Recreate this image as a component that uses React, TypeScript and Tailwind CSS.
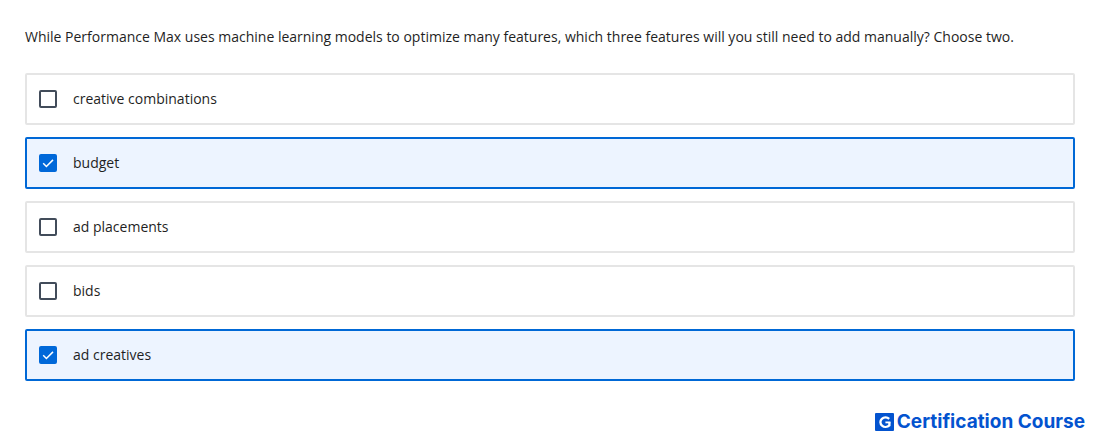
import { useState } from 'react';
import clsx from 'clsx';

const question =
  'While Performance Max uses machine learning models to optimize many features, which three features will you still need to add manually? Choose two.';

const options = [
  { id: 'creative-combinations', label: 'creative combinations' },
  { id: 'budget', label: 'budget' },
  { id: 'ad-placements', label: 'ad placements' },
  { id: 'bids', label: 'bids' },
  { id: 'ad-creatives', label: 'ad creatives' },
];

function Option({
  id,
  label,
  checked,
  onToggle,
}: {
  id: string;
  label: string;
  checked: boolean;
  onToggle: () => void;
}) {
  return (
    <label
      htmlFor={id}
      className={clsx(
        'flex items-center gap-4 rounded-xs border-2 px-3 py-3 cursor-pointer',
        checked ? 'border-[#0068d6] bg-[#edf4ff]' : 'border-[#e5e5e5] bg-white',
      )}
    >
      <span className="relative flex size-[18px]">
        <input
          id={id}
          type="checkbox"
          checked={checked}
          onChange={onToggle}
          className="size-[18px] appearance-none rounded-xs border-2 border-[#424c5a] bg-white checked:border-[#0068d9] checked:bg-[#0068d9]"
        />
        {checked && (
          <svg
            viewBox="0 0 18 18"
            className="pointer-events-none absolute inset-0 size-[18px]"
            fill="none"
            stroke="white"
            strokeWidth="1.5"
            aria-hidden="true"
          >
            <path d="M4.2 9.3 7.4 12.5 14 5.9" />
          </svg>
        )}
      </span>
      <span>{label}</span>
    </label>
  );
}

function Logo() {
  return (
    <div className="flex items-center gap-[3px] text-[#0353cf]">
      <svg viewBox="0 0 19 18" className="h-[18px] w-[19px]" aria-hidden="true">
        <rect width="19" height="18" rx="1" fill="currentColor" />
        <path
          d="M14.2 5.8A5.2 4.7 0 1 0 14.4 12.4V9.2"
          fill="none"
          stroke="white"
          strokeWidth="2.3"
        />
        <path d="M10.4 9.4H15.5" stroke="white" strokeWidth="1.8" />
      </svg>
      <span className="font-['Inter'] text-[19px] leading-6 font-bold">
        Certification Course
      </span>
    </div>
  );
}

export default function App() {
  const [selected, setSelected] = useState<string[]>(['budget', 'ad-creatives']);

  const toggle = (id: string) => {
    setSelected((prev) =>
      prev.includes(id) ? prev.filter((item) => item !== id) : [...prev, id],
    );
  };

  return (
    <main className="bg-white pt-[25px] font-['Open_Sans',sans-serif] text-sm leading-6 text-[#1f1f1f]">
      <fieldset className="px-[25px]">
        <legend className="mb-6">{question}</legend>
        <div className="flex flex-col gap-3">
          {options.map((option) => (
            <Option
              key={option.id}
              id={option.id}
              label={option.label}
              checked={selected.includes(option.id)}
              onToggle={() => toggle(option.id)}
            />
          ))}
        </div>
      </fieldset>

      <footer className="mt-[29px] flex justify-end px-[15px]">
        <Logo />
      </footer>
    </main>
  );
}
